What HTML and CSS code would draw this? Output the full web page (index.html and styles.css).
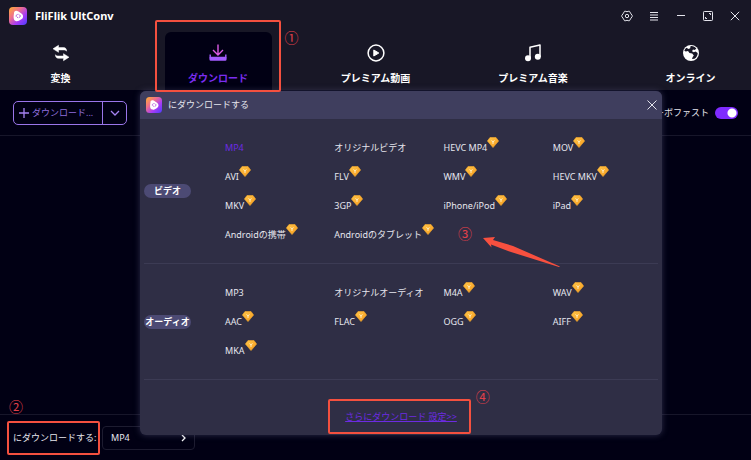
FILE: index.html
```
<!DOCTYPE html>
<html lang="ja">
<head>
    <meta charset="UTF-8">
    <meta name="viewport" content="width=device-width, initial-scale=1.0">
    <title>FliFlik UltConv</title>
    <link rel="stylesheet" href="styles.css">
</head>
<body>

<!-- Shared shapes -->
<svg class="defs" aria-hidden="true">
    <defs>
        <linearGradient id="logoFill" x1="0" y1="0" x2="1" y2="1">
            <stop offset="0" stop-color="#ffb02e"/>
            <stop offset="0.35" stop-color="#f0708a"/>
            <stop offset="0.65" stop-color="#a93cf5"/>
            <stop offset="1" stop-color="#4a3cff"/>
        </linearGradient>
        <linearGradient id="gemFill" x1="0" y1="0" x2="1" y2="1">
            <stop offset="0" stop-color="#ffc64a"/>
            <stop offset="1" stop-color="#f79a1c"/>
        </linearGradient>
    </defs>
    <symbol id="logo" viewBox="0 0 18 18">
        <rect width="18" height="18" rx="4" fill="url(#logoFill)"/>
        <path d="M5 6.200C4.800 3.800 7 3 9 4.200l3.400 2.200c2.300 1.500 2.200 4.600 0 5.900-2.300 1.300-3.600 2.300-5.200 1.900C4 13.600 4.500 9.500 5 6.200z" fill="#fff"/>
        <path d="M7.200 9.800V8.300l1.500-1M11.200 8.200v1.500l-1.500 1M8 10l1 .8M9.500 7.300l1.200.9" fill="none" stroke="#b04fd8" stroke-width=".9"/>
    </symbol>
    <symbol id="gem" viewBox="0 0 12 11">
        <path d="M3 .5h6L11.600 4 6 10.600.4 4z" fill="url(#gemFill)" stroke="#f9ab2d" stroke-width=".6" stroke-linejoin="round"/>
        <path d="M4.600 3.300 6 5.300l1.400-2M6 5.200V7" fill="none" stroke="#fff0c8" stroke-width=".9"/>
    </symbol>
</svg>

<div class="app">
    <header class="header">
        <div class="titlebar">
            <svg class="logo"><use href="#logo"/></svg>
            <h1 class="app-name">FliFlik UltConv</h1>
            <div class="window-buttons">
                <button aria-label="設定">
                    <svg viewBox="0 0 12 12"><path d="M3.500 1.300h1.400L6 1.800l1.100-.5h1.400l1 1.800 1.700 2.400v1L9.500 8.900l-1 1.800H7.100L6 10.200l-1.100.5H3.500l-1-1.800L.8 6.500v-1l1.700-2.400z"/><circle cx="6" cy="6" r="1.700"/></svg>
                </button>
                <button aria-label="メニュー">
                    <svg viewBox="0 0 12 12"><path d="M2 2.500h8M2 5h8M2 7.500h8M2 10h8"/></svg>
                </button>
                <button aria-label="最小化">
                    <svg viewBox="0 0 12 12"><path d="M2 5.500h8"/></svg>
                </button>
                <button aria-label="最大化">
                    <svg viewBox="0 0 12 12"><rect x="1.500" y="1.500" width="9" height="9" rx=".8"/><path d="M7 3.500h1.500V5M3.500 7v1.500H5"/></svg>
                </button>
                <button aria-label="閉じる">
                    <svg viewBox="0 0 12 12"><path d="m1.800 1.800 8.400 8.400M10.200 1.800l-8.400 8.400"/></svg>
                </button>
            </div>
        </div>

        <nav class="tabs">
            <button class="tab">
                <svg viewBox="0 0 18 18"><path d="M6.500 1.300 1 4.800l5.500 3.500V5.900H12c1.300 0 2 .4 2.500 1.300.2-2.200-1-3.600-2.800-3.600H6.500z" fill="#fff" stroke="#fff" stroke-width=".5"/><path d="M11.500 9.700 17 13.200l-5.500 3.500v-2.400H6.300c-1.800 0-3-1.400-2.800-3.600.5.900 1.200 1.300 2.500 1.300h5.500z" fill="#fff" stroke="#fff" stroke-width=".5"/></svg>
                変換
            </button>
            <button class="tab active">
                <svg viewBox="0 0 18 18"><path d="M9 .5v10.300M4 6l5 5 5-5" fill="none" stroke="#dc5ae6" stroke-width="1.400"/><path d="M1.200 10.500v3.300h15.600v-3.300" fill="none" stroke="#a45cff" stroke-width="1.400"/><rect x=".5" y="12.800" width="17" height="4" rx="1.200" fill="#a45cff"/></svg>
                ダウンロード
                <span class="mark mark-tab"></span>
                <span class="step step-1">①</span>
            </button>
            <button class="tab">
                <svg viewBox="0 0 18 18"><circle cx="9" cy="9" r="7.900" fill="none" stroke="#fff" stroke-width="1.500"/><path d="M6.800 6v6l5-3z" fill="#fff" stroke="#fff" stroke-linejoin="round"/></svg>
                プレミアム動画
            </button>
            <button class="tab">
                <svg viewBox="0 0 18 18"><path d="M6 14V3.200L16 1v12" fill="none" stroke="#fff" stroke-width="1.500" stroke-linejoin="round"/><circle cx="4" cy="14.200" r="3" fill="#fff"/><circle cx="13.800" cy="12.800" r="3" fill="#fff"/></svg>
                プレミアム音楽
            </button>
            <button class="tab">
                <svg viewBox="0 0 18 18"><circle cx="9" cy="9" r="8" fill="#fff"/><path d="M8.500 2.200c2.300-.4 4.500.6 5.800 2.500L12.500 6l-1.500-.5-1 1.700 1.800 1 1.700-.7 2.200 1.500c0 2.500-1.200 4.600-3.200 5.700L10 15l.7-2 1.100-1.500-1.600-2L7.500 9 6 7 3.800 7.500l-1.500-.7c.4-1.200 1.200-2.300 2.200-3L6.500 5l1.700-.8z" fill="#181726"/></svg>
                オンライン
            </button>
        </nav>
    </header>

    <div class="toolbar">
        <div class="split-button">
            <button class="split-main">
                <svg viewBox="0 0 10 10"><path d="M5 0v10M0 5h10"/></svg>
                ダウンロード...
            </button>
            <button class="split-arrow" aria-label="その他">
                <svg viewBox="0 0 10 10"><path d="m1 3 4 4 4-4"/></svg>
            </button>
        </div>
        <label class="turbo">
            ターボファスト
            <input type="checkbox" class="switch" checked>
        </label>
    </div>

    <main class="content"></main>

    <footer class="footer">
        <label class="format-label" for="format">にダウンロードする:
            <span class="mark mark-label"></span>
            <span class="step step-2">②</span>
        </label>
        <div class="format-box">
            <select id="format" class="format">
                <option>MP4</option>
            </select>
            <svg class="format-arrow" viewBox="0 0 6 8"><path d="m1 1 3 3-3 3"/></svg>
        </div>
    </footer>

    <section class="dialog" role="dialog" aria-labelledby="dialogTitle">
        <div class="dialog-header">
            <svg class="dialog-logo"><use href="#logo"/></svg>
            <h2 id="dialogTitle">にダウンロードする</h2>
            <button class="dialog-close" aria-label="閉じる">
                <svg viewBox="0 0 12 12"><path d="m1.500 1.500 9 9M10.500 1.500l-9 9"/></svg>
            </button>
        </div>

        <div class="group">
            <div class="group-label"><span>ビデオ</span></div>
            <div class="formats">
                <button class="selected">MP4</button>
                <button>オリジナルビデオ</button>
                <button>HEVC MP4<svg><use href="#gem"/></svg></button>
                <button>MOV<svg><use href="#gem"/></svg></button>
                <button>AVI<svg><use href="#gem"/></svg></button>
                <button>FLV<svg><use href="#gem"/></svg></button>
                <button>WMV<svg><use href="#gem"/></svg></button>
                <button>HEVC MKV<svg><use href="#gem"/></svg></button>
                <button>MKV<svg><use href="#gem"/></svg></button>
                <button>3GP<svg><use href="#gem"/></svg></button>
                <button>iPhone/iPod<svg><use href="#gem"/></svg></button>
                <button>iPad<svg><use href="#gem"/></svg></button>
                <button>Androidの携帯<svg><use href="#gem"/></svg></button>
                <button>Androidのタブレット<svg><use href="#gem"/></svg></button>
            </div>
            <span class="step step-3">③</span>
            <svg class="arrow" viewBox="0 0 78 32"><path d="M0 1 12 0 10 3 30 9 77 29.500 76 30 28 15 8 7.500 8.500 10.500z" fill="#f8503f"/></svg>
        </div>

        <div class="group">
            <div class="group-label"><span>オーディオ</span></div>
            <div class="formats">
                <button>MP3</button>
                <button>オリジナルオーディオ</button>
                <button>M4A<svg><use href="#gem"/></svg></button>
                <button>WAV<svg><use href="#gem"/></svg></button>
                <button>AAC<svg><use href="#gem"/></svg></button>
                <button>FLAC<svg><use href="#gem"/></svg></button>
                <button>OGG<svg><use href="#gem"/></svg></button>
                <button>AIFF<svg><use href="#gem"/></svg></button>
                <button>MKA<svg><use href="#gem"/></svg></button>
            </div>
        </div>

        <div class="dialog-footer">
            <div class="more">
                <a href="#">さらにダウンロード 設定&gt;&gt;</a>
                <span class="mark mark-more"></span>
                <span class="step step-4">④</span>
            </div>
        </div>
    </section>
</div>

</body>
</html>
```

FILE: styles.css
```
* {
    box-sizing: border-box;
}
body {
    margin: 0;
    background-color: #010014;
    color: #e6e6ee;
    font-family: "Noto Sans", "Noto Sans CJK JP", sans-serif;
    font-size: 9px;
    line-height: 14px;
}
button, select {
    margin: 0;
    padding: 0;
    border: 0;
    background: none;
    color: inherit;
    font: inherit;
    cursor: pointer;
}
h1, h2 {
    margin: 0;
}
.defs {
    position: absolute;
    width: 0;
    height: 0;
}
.app {
    position: relative;
    display: flex;
    flex-direction: column;
    min-height: 100vh;
}

/* Header */
.header {
    background-color: #181726;
}
.titlebar {
    display: flex;
    align-items: center;
    height: 32px;
    padding: 0 10px 0 9px;
}
.logo {
    width: 18px;
    height: 18px;
}
.app-name {
    margin-left: 8px;
    color: #fff;
    font-size: 11px;
    line-height: 16px;
}
.window-buttons {
    display: flex;
    gap: 15px;
    margin-left: auto;
}
.window-buttons button,
.dialog-close {
    width: 12px;
    height: 12px;
}
.window-buttons svg,
.dialog-close svg {
    display: block;
    width: 12px;
    height: 12px;
    fill: none;
    stroke: #e4e4ec;
    stroke-width: 1;
}
.tabs {
    display: flex;
    justify-content: space-between;
    padding: 0 7px;
}
.tab {
    position: relative;
    display: flex;
    flex-direction: column;
    align-items: center;
    gap: 9px;
    width: 107px;
    height: 58px;
    padding-top: 12px;
    border-radius: 6px 6px 0 0;
    color: #fff;
    font-size: 10px;
    font-weight: bold;
}
.tab svg {
    width: 18px;
    height: 18px;
}
.tab.active {
    background-color: #010014;
    color: #7a2df0;
}

/* Toolbar */
.toolbar {
    display: flex;
    justify-content: space-between;
    align-items: center;
    height: 46px;
    padding: 0 13px;
    border-bottom: 1px solid #17162a;
}
.split-button {
    display: flex;
    height: 24px;
    border: 1px solid #9a75ea;
    border-radius: 5px;
    color: #8f6fdc;
}
.split-button svg {
    width: 10px;
    height: 10px;
    fill: none;
    stroke: #a683f2;
    stroke-width: 1.3;
}
.split-main {
    display: flex;
    align-items: center;
    gap: 3px;
    width: 88px;
    padding-left: 5px;
    white-space: nowrap;
}
.split-arrow {
    display: flex;
    align-items: center;
    justify-content: center;
    width: 24px;
    border-left: 1px solid #9a75ea;
}
.turbo {
    display: flex;
    align-items: center;
    gap: 6px;
}
.switch {
    appearance: none;
    width: 23px;
    height: 12px;
    margin: 0;
    border-radius: 6px;
    background: radial-gradient(circle at 17px 6px, #fff 4px, #7f2bff 5px);
}

.content {
    flex: 1;
}

/* Bottom bar */
.footer {
    display: flex;
    align-items: center;
    gap: 8px;
    height: 46px;
    padding: 0 13px;
    border-top: 1px solid #17162a;
}
.format-label {
    position: relative;
    width: 81px;
    white-space: nowrap;
}
.format-box {
    position: relative;
    width: 93px;
}
.format {
    appearance: none;
    display: block;
    width: 100%;
    height: 24px;
    padding: 0 8px;
    border: 1px solid #1d1c30;
    border-radius: 4px;
}
.format-arrow {
    position: absolute;
    top: 8px;
    right: 8px;
    width: 6px;
    height: 8px;
    fill: none;
    stroke: #fff;
    stroke-width: 1.3;
}

/* Format dialog */
.dialog {
    position: absolute;
    top: 91px;
    left: 140px;
    right: 89px;
    border-radius: 6px;
    background-color: #2f2e45;
    box-shadow: 0 0 6px rgba(90, 88, 130, 0.5);
}
.dialog-header {
    display: flex;
    align-items: center;
    height: 28px;
    padding: 0 4px 0 6px;
    border-radius: 6px 6px 0 0;
    background-color: #3f3e5e;
}
.dialog-logo {
    width: 16px;
    height: 16px;
}
.dialog-header h2 {
    margin-left: 6px;
    font-size: 9px;
    font-weight: normal;
}
.dialog-close {
    margin-left: auto;
}
.group {
    position: relative;
    display: flex;
    align-items: center;
    margin: 0 4px;
    padding: 14px 0;
    border-bottom: 1px solid #3c3b54;
}
.group-label {
    flex: none;
    width: 81px;
}
.group-label span {
    display: block;
    width: 47px;
    border-radius: 7px;
    background-color: #4c4a74;
    color: #fff;
    font-weight: bold;
    text-align: center;
    white-space: nowrap;
}
.formats {
    display: grid;
    grid-template-columns: repeat(4, 1fr);
    flex: 1;
    margin-right: -4px;
}
.formats button {
    display: flex;
    align-items: center;
    height: 29px;
    white-space: nowrap;
}
.formats svg {
    width: 12px;
    height: 11px;
    margin-bottom: 10px;
}
.formats .selected {
    color: #6d2be2;
}
.dialog-footer {
    display: flex;
    justify-content: center;
    height: 55px;
    padding-top: 30px;
}
.more {
    position: relative;
    height: 14px;
}
.more a {
    color: #6d2be2;
}

/* Step marks */
.mark {
    position: absolute;
    border: 2px solid #f4503f;
    border-radius: 2px;
    z-index: 2;
}
.mark-tab {
    inset: -12px -9px -2px -10px;
}
.mark-label {
    inset: -10px -6px;
}
.mark-more {
    inset: -11px -14px -10px -17px;
}
.step {
    position: absolute;
    color: #e0404a;
    font-family: "Noto Sans CJK JP", sans-serif;
    font-size: 14px;
    font-weight: normal;
    line-height: 14px;
    z-index: 2;
}
.step-1 {
    top: -2px;
    left: 120px;
}
.step-2 {
    top: -32px;
    left: -4px;
}
.step-3 {
    top: 107px;
    left: 314px;
}
.step-4 {
    top: -21px;
    right: -33px;
}
.arrow {
    position: absolute;
    top: 118px;
    left: 339px;
    width: 78px;
    height: 32px;
}
```
